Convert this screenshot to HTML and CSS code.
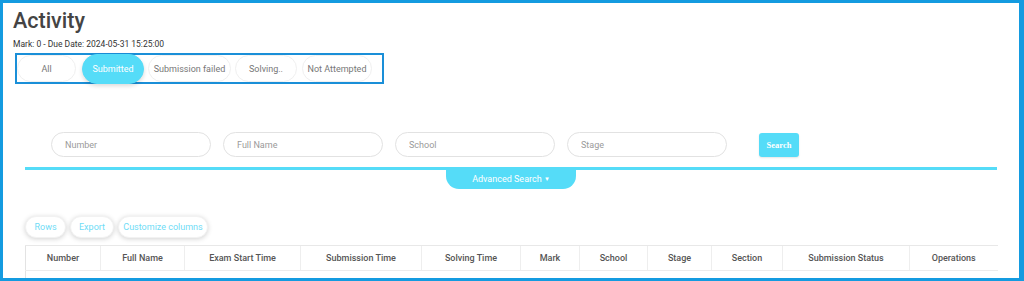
FILE: index.html
```html
<!DOCTYPE html>
<html>
<head>
<meta charset="utf-8">
<link rel="stylesheet" href="styles.css">
</head>
<body>
<div class="frame">
  <h1 class="title">Activity</h1>
  <div class="meta">Mark: 0 - Due Date: 2024-05-31 15:25:00</div>
  <div class="tabs">
    <button class="tab t-all">All</button>
    <button class="tab t-sub active">Submitted</button>
    <button class="tab t-fail">Submission failed</button>
    <button class="tab t-solv">Solving..</button>
    <button class="tab t-not">Not Attempted</button>
  </div>
  <div class="content">
    <div class="search-row">
      <input class="field" placeholder="Number">
      <input class="field" placeholder="Full Name">
      <input class="field" placeholder="School">
      <input class="field" placeholder="Stage">
      <button class="search-btn">Search</button>
    </div>
    <div class="divider"></div>
    <div class="adv-wrap"><div class="adv">Advanced Search <span class="caret">&#9660;</span></div></div>
    <div class="tools">
      <button class="tool">Rows</button>
      <button class="tool">Export</button>
      <button class="tool">Customize columns</button>
    </div>
    <table class="grid">
      <thead>
        <tr>
          <th class="c1">Number</th>
          <th class="c2">Full Name</th>
          <th class="c3">Exam Start Time</th>
          <th class="c4">Submission Time</th>
          <th class="c5">Solving Time</th>
          <th class="c6">Mark</th>
          <th class="c7">School</th>
          <th class="c8">Stage</th>
          <th class="c9">Section</th>
          <th class="c10">Submission Status</th>
          <th class="c11">Operations</th>
        </tr>
      </thead>
      <tbody>
        <tr><td class="empty" colspan="11"></td></tr>
      </tbody>
    </table>
  </div>
</div>
</body>
</html>
```
FILE: styles.css
```css
* { box-sizing: border-box; }
html, body { margin: 0; padding: 0; background: #fff; }
body { font-family: Roboto, "Liberation Sans", Arial, sans-serif; }

.frame {
  width: 1024px;
  height: 281px;
  overflow: hidden;
  border-style: solid;
  border-color: #149be0;
  border-width: 3px 5px 3px 3px;
  padding: 4px 0 0 10px;
  background: #fff;
}

.title {
  margin: 0;
  font-size: 21.5px;
  line-height: 28px;
  font-weight: 500;
  color: #444;
}

.meta {
  margin-top: 3px;
  font-size: 8.5px;
  line-height: 12px;
  color: #333;
}

.tabs {
  margin: 3px 0 0 2px;
  width: 369px;
  height: 31px;
  border: 2px solid #1a8fd8;
  display: flex;
  align-items: center;
  gap: 4px;
  padding: 0;
}

.tab {
  height: 27px;
  border: 1px solid #f0f0f0;
  border-radius: 14px;
  background: #fff;
  font-family: Roboto, "Liberation Sans", Arial, sans-serif;
  font-size: 9px;
  color: #777;
  padding: 0;
}
.t-all { width: 59px; }
.t-sub { width: 62px; margin-left: 2px; }
.t-fail { width: 83px; }
.t-solv { width: 62px; }
.t-not { width: 70px; margin-left: 1px; }
.tab.active {
  background: #55dcf8;
  border-color: #55dcf8;
  color: #fff;
  height: 30px;
  border-radius: 15px;
  box-shadow: 0 2px 4px rgba(0,0,0,0.15);
}

.content {
  margin-left: 12px;
  width: 972px;
}

.search-row {
  margin-top: 48px;
  padding-left: 26px;
  display: flex;
  align-items: center;
  gap: 12px;
}

.field {
  width: 160px;
  height: 25px;
  border: 1px solid #e2e2e2;
  border-radius: 13px;
  padding: 0 0 0 13px;
  font-family: Roboto, "Liberation Sans", Arial, sans-serif;
  font-size: 9px;
  color: #999;
  outline: none;
}
.field::placeholder { color: #9a9a9a; }

.search-btn {
  margin-left: 20px;
  width: 40px;
  height: 24px;
  border: none;
  border-radius: 3px;
  background: #55dcf8;
  color: #fff;
  font-family: "Liberation Serif", "Times New Roman", serif;
  font-weight: bold;
  font-size: 8.5px;
  padding: 0;
  box-shadow: 0 1px 2px rgba(0,0,0,0.1);
}

.divider {
  margin-top: 10px;
  height: 3px;
  background: #55dcf8;
}

.adv-wrap {
  display: flex;
  justify-content: center;
}
.adv {
  width: 130px;
  height: 19px;
  background: #55dcf8;
  border-radius: 0 0 13px 13px;
  color: #fff;
  font-size: 9px;
  line-height: 17px;
  text-align: center;
}
.caret { font-size: 6px; vertical-align: 1px; }

.tools {
  margin-top: 27px;
  display: flex;
  gap: 4px;
}
.tool {
  height: 22px;
  border: 1px solid #f2f2f2;
  border-radius: 11px;
  background: #fff;
  box-shadow: 0 1px 5px rgba(0,0,0,0.18);
  color: #6fdcf6;
  font-family: Roboto, "Liberation Sans", Arial, sans-serif;
  font-size: 9px;
  padding: 0;
}
.tool:nth-child(1) { width: 41px; }
.tool:nth-child(2) { width: 44px; }
.tool:nth-child(3) { width: 90px; }

.grid {
  margin-top: 7px;
  width: 972px;
  table-layout: fixed;
  border-collapse: collapse;
}
.grid th {
  height: 25px;
  border-top: 1px solid #e8e8e8;
  border-bottom: 1px solid #ececec;
  border-left: 1px solid #eeeeee;
  font-size: 9px;
  font-weight: 500;
  color: #555;
  padding: 0;
  text-align: center;
}
.grid th.c1 { border-left: 1px solid #e3e3e3; width: 75px; }
.c2 { width: 84px; }
.c3 { width: 116px; }
.c4 { width: 121px; }
.c5 { width: 99px; }
.c6 { width: 59px; }
.c7 { width: 68px; }
.c8 { width: 64px; }
.c9 { width: 71px; }
.c10 { width: 127px; }
.c11 { width: 88px; }
.grid td.empty {
  height: 20px;
  border-left: 1px solid #e3e3e3;
  padding: 0;
}
```
